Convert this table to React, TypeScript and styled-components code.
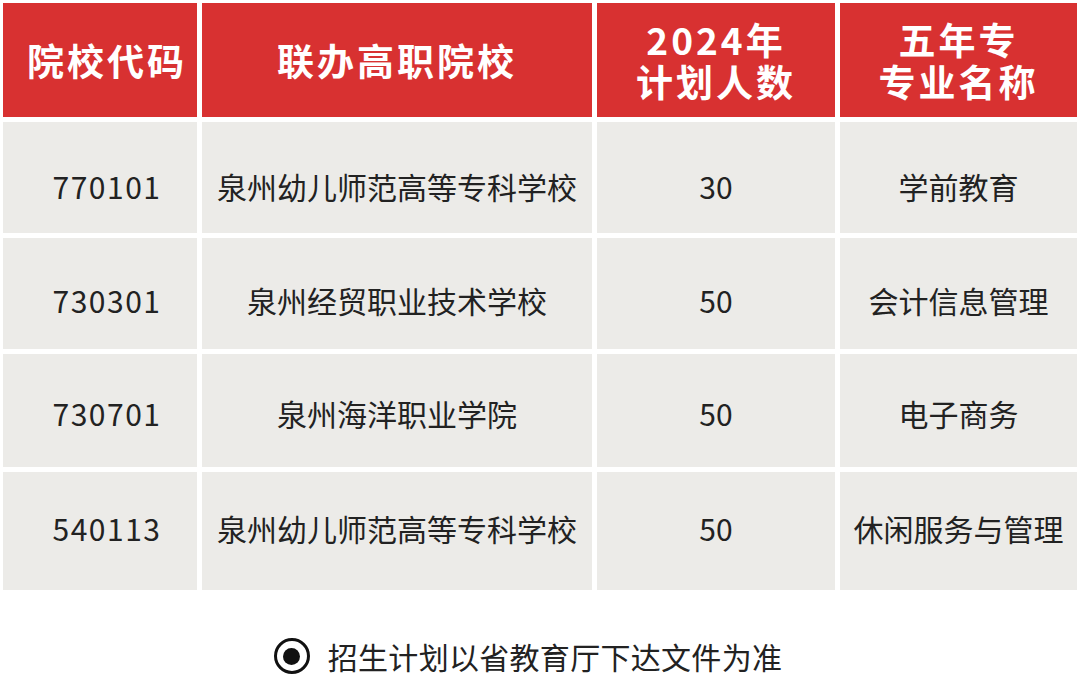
import { Fragment } from 'react';
import styled, { createGlobalStyle } from 'styled-components';

const GlobalStyle = createGlobalStyle`
    html, body {
        margin: 0;
        padding: 0;
        background: #fff;
    }
    body {
        font-family: "Noto Sans CJK SC", "Noto Sans", sans-serif;
        color: #222;
    }
`;

// Styled components
const Page = styled.main`
    width: 1080px;
    height: 697px;
    padding: 3px 0 0 3px;
    box-sizing: border-box;
    display: flex;
    flex-direction: column;
`;

const Table = styled.div`
    display: grid;
    grid-template-columns: 194px 390px 238px 237px;
    grid-template-rows: 114px 111px 111px 113px 118px;
    gap: 5px;
`;

const HeadCell = styled.div<{ $code?: boolean }>`
    background: #d83131;
    color: #fff;
    font-weight: 700;
    font-size: 37px;
    line-height: 42px;
    letter-spacing: 3px;
    display: flex;
    flex-direction: column;
    align-items: center;
    justify-content: center;
    text-align: center;
    padding-left: ${(p) => (p.$code ? '14px' : '0')};
`;

const Cell = styled.div<{ $code?: boolean; $shift: number }>`
    background: #ecebe8;
    font-size: 30px;
    letter-spacing: ${(p) => (p.$code ? '1.5px' : '0')};
    display: flex;
    align-items: center;
    justify-content: center;
    padding-left: ${(p) => (p.$code ? '14px' : '0')};
    padding-top: ${(p) => (p.$shift > 0 ? p.$shift * 2 : 0)}px;
    padding-bottom: ${(p) => (p.$shift < 0 ? -p.$shift * 2 : 0)}px;
    box-sizing: border-box;
`;

const Note = styled.div`
    display: flex;
    align-items: center;
    justify-content: center;
    gap: 18px;
    margin-top: 44px;
    padding-right: 27px;
    font-size: 30px;
    letter-spacing: 0.3px;
    color: #222;
`;

const Dot = styled.span`
    width: 30px;
    height: 30px;
    border: 3.5px solid #111;
    border-radius: 50%;
    display: flex;
    align-items: center;
    justify-content: center;

    &::after {
        content: '';
        width: 17px;
        height: 17px;
        border-radius: 50%;
        background: #111;
    }
`;

const rows = [
    { code: '770101', school: '泉州幼儿师范高等专科学校', num: '30', major: '学前教育', shift: 8 },
    { code: '730301', school: '泉州经贸职业技术学校', num: '50', major: '会计信息管理', shift: 6 },
    { code: '730701', school: '泉州海洋职业学院', num: '50', major: '电子商务', shift: 2 },
    { code: '540113', school: '泉州幼儿师范高等专科学校', num: '50', major: '休闲服务与管理', shift: -3 },
];

// React Component
export default function App() {
    return (
        <>
            <GlobalStyle />
            <Page>
                <Table>
                    <HeadCell $code>院校代码</HeadCell>
                    <HeadCell>联办高职院校</HeadCell>
                    <HeadCell>
                        <span>2024年</span>
                        <span>计划人数</span>
                    </HeadCell>
                    <HeadCell>
                        <span>五年专</span>
                        <span>专业名称</span>
                    </HeadCell>
                    {rows.map((r) => (
                        <Fragment key={r.code + r.major}>
                            <Cell $code $shift={r.shift}>{r.code}</Cell>
                            <Cell $shift={r.shift}>{r.school}</Cell>
                            <Cell $shift={r.shift}>{r.num}</Cell>
                            <Cell $shift={r.shift}>{r.major}</Cell>
                        </Fragment>
                    ))}
                </Table>
                <Note>
                    <Dot />
                    招生计划以省教育厅下达文件为准
                </Note>
            </Page>
        </>
    );
}
